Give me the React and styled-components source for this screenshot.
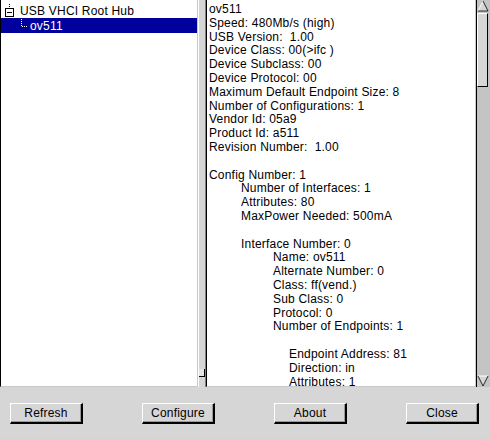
import React from "react";
import styled, { createGlobalStyle } from "styled-components";

const GlobalStyle = createGlobalStyle`
  html, body {
    margin: 0;
    padding: 0;
    background: #d6d6d6;
  }
  body {
    font-family: "Liberation Sans", Arial, sans-serif;
    font-size: 12px;
    color: #000;
  }
`;

const Window = styled.div`
  width: 490px;
  height: 439px;
  display: flex;
  flex-direction: column;
  background: #d6d6d6;
  overflow: hidden;
`;

const Panes = styled.div`
  height: 387px;
  display: flex;
`;

const TreePane = styled.div`
  width: 198px;
  flex: none;
  background: #fff;
  border-left: 1px solid #000;
  border-right: 1px solid #c8c8c8;
  border-bottom: 1px solid #c8c8c8;
  padding-top: 3px;
  box-sizing: border-box;
  letter-spacing: 0.2px;
`;

const TreeRow = styled.div`
  height: 15px;
  display: flex;
  align-items: center;
  padding-left: ${(p) => p.indent}px;
  background: ${(p) => (p.selected ? "#00009c" : "transparent")};
  color: ${(p) => (p.selected ? "#fff" : "#000")};
  white-space: nowrap;
`;

const Gutter = styled.div`
  width: 7px;
  flex: none;
  position: relative;
  border-left: 1px solid #fff;
  box-sizing: border-box;
`;

const PaneHandle = styled.div`
  position: absolute;
  left: 0;
  top: 369px;
  width: 5px;
  height: 7px;
  background: #e4e4e4;
  border-right: 1px solid #000;
  border-bottom: 1px solid #000;
`;

const TextFrame = styled.div`
  flex: 1;
  display: flex;
  border-left: 1px solid #808080;
  min-width: 0;
`;

const TextArea = styled.div`
  flex: 1;
  background: #fff;
  border-left: 1px solid #000;
  border-right: 1px solid #c8c8c8;
  border-bottom: 1px solid #c8c8c8;
  padding: 3px 0 0 2px;
  overflow: hidden;
  letter-spacing: 0.2px;
`;

const Line = styled.div`
  height: 13.8px;
  line-height: 13.8px;
  padding-left: ${(p) => p.indent || 0}px;
  white-space: pre;
`;

const Scrollbar = styled.div`
  width: 13px;
  background: #c4c4c4;
  border-left: 1px solid #000;
  display: flex;
  flex-direction: column;
`;

const Thumb = styled.div`
  height: 72px;
  margin-right: 2px;
  background: #d6d6d6;
  border-top: 1px solid #fff;
  border-left: 1px solid #fff;
  border-right: 1px solid #000;
  border-bottom: 1px solid #000;
`;

const Arrow = styled.svg`
  display: block;
  flex: none;
`;

const Spacer = styled.div`
  flex: 1;
`;

const ButtonBar = styled.div`
  flex: 1;
  display: flex;
  justify-content: space-between;
  align-items: flex-start;
  padding: 16px 11px 0 10px;
`;

const Button = styled.button`
  width: 73px;
  height: 21px;
  padding: 0;
  background: #d6d6d6;
  font-family: "Liberation Sans", Arial, sans-serif;
  font-size: 12px;
  letter-spacing: 0.2px;
  color: #000;
  border-style: solid;
  border-width: 1px 2px 2px 1px;
  border-color: #fff #000 #000 #fff;
  box-shadow: inset -1px -1px 0 #9a9a9a;
  cursor: pointer;
`;

const ExpanderIcon = () => (
  <svg width="14" height="15" viewBox="0 0 14 15" style={{ flex: "none" }}>
    <line x1="8.5" y1="-3" x2="8.5" y2="5" stroke="#000" strokeDasharray="1 1" />
    <rect x="4.5" y="5.5" width="8" height="8" fill="#fff" stroke="#000" />
    <line x1="6" y1="9.5" x2="11" y2="9.5" stroke="#000" />
  </svg>
);

const ChildConnector = () => (
  <svg width="10" height="15" viewBox="0 0 10 15" style={{ flex: "none" }}>
    <line x1="1.5" y1="1" x2="1.5" y2="8" stroke="#fff" strokeDasharray="1 1" />
    <line x1="2" y1="8.5" x2="8" y2="8.5" stroke="#fff" strokeDasharray="1 1" />
  </svg>
);

const info = [
  ["ov511", 0],
  ["Speed: 480Mb/s (high)", 0],
  ["USB Version:  1.00", 0],
  ["Device Class: 00(>ifc )", 0],
  ["Device Subclass: 00", 0],
  ["Device Protocol: 00", 0],
  ["Maximum Default Endpoint Size: 8", 0],
  ["Number of Configurations: 1", 0],
  ["Vendor Id: 05a9", 0],
  ["Product Id: a511", 0],
  ["Revision Number:  1.00", 0],
  ["", 0],
  ["Config Number: 1", 0],
  ["Number of Interfaces: 1", 32],
  ["Attributes: 80", 32],
  ["MaxPower Needed: 500mA", 32],
  ["", 0],
  ["Interface Number: 0", 32],
  ["Name: ov511", 64],
  ["Alternate Number: 0", 64],
  ["Class: ff(vend.)", 64],
  ["Sub Class: 0", 64],
  ["Protocol: 0", 64],
  ["Number of Endpoints: 1", 64],
  ["", 0],
  ["Endpoint Address: 81", 80],
  ["Direction: in", 80],
  ["Attributes: 1", 80],
];

export default function App() {
  return (
    <>
      <GlobalStyle />
      <Window>
        <Panes>
          <TreePane>
            <TreeRow indent={0}>
              <ExpanderIcon />
              <span style={{ marginLeft: 5 }}>USB VHCI Root Hub</span>
            </TreeRow>
            <TreeRow indent={19} selected>
              <ChildConnector />
              <span>ov511</span>
            </TreeRow>
          </TreePane>
          <Gutter>
            <PaneHandle />
          </Gutter>
          <TextFrame>
            <TextArea>
              {info.map(([text, indent], i) => (
                <Line key={i} indent={indent}>
                  {text || "\u00a0"}
                </Line>
              ))}
            </TextArea>
            <Scrollbar>
              <Arrow width="12" height="13" viewBox="0 0 12 13">
                <polygon points="6,1 11,11 1,11" fill="#d6d6d6" />
                <polyline points="1,11 6,1" fill="none" stroke="#fff" />
                <polyline points="6,1 11,11 1,11" fill="none" stroke="#000" strokeWidth="0.8" />
              </Arrow>
              <Thumb />
              <Spacer />
              <Arrow width="12" height="13" viewBox="0 0 12 13">
                <polygon points="1,2 11,2 6,12" fill="#d6d6d6" />
                <polyline points="1,2 11,2" fill="none" stroke="#fff" />
                <polyline points="1,2 6,12 11,2" fill="none" stroke="#000" strokeWidth="0.8" />
              </Arrow>
            </Scrollbar>
          </TextFrame>
        </Panes>
        <ButtonBar>
          <Button>Refresh</Button>
          <Button>Configure</Button>
          <Button>About</Button>
          <Button>Close</Button>
        </ButtonBar>
      </Window>
    </>
  );
}
